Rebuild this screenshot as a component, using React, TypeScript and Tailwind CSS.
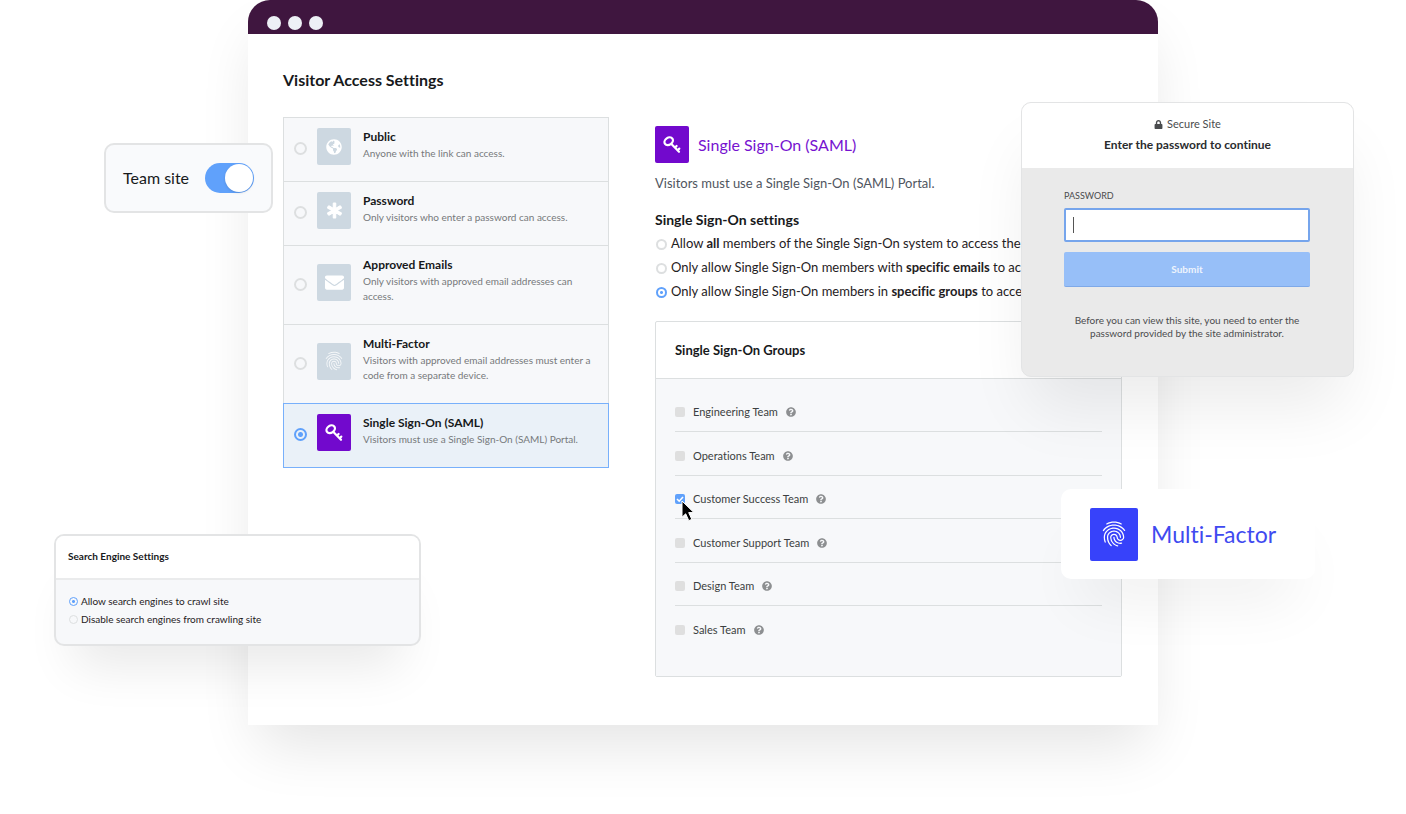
import React from "react";
import { FaAsterisk, FaEnvelope, FaGlobeAmericas, FaLock, FaQuestionCircle } from "react-icons/fa";
import { MdFingerprint } from "react-icons/md";

function KeyIcon({ className }: { className?: string }) {
  return (
    <svg viewBox="0 0 18 18" className={className} fill="none" stroke="currentColor" strokeLinecap="round" aria-hidden="true">
      <ellipse cx="5.7" cy="5.2" rx="4.5" ry="3.5" transform="rotate(-35 5.7 5.2)" strokeWidth="2.2" />
      <path d="M8.4 8 16 15.8M12 11.6l1.6-1.6M14.6 14.2l1.7-1.6" strokeWidth="2.2" />
    </svg>
  );
}

const methods = [
  { id: "public", title: "Public", text: "Anyone with the link can access.", icon: <FaGlobeAmericas className="size-4" /> },
  { id: "password", title: "Password", text: "Only visitors who enter a password can access.", icon: <FaAsterisk className="size-[15px] overflow-visible stroke-current stroke-[36px]" /> },
  { id: "emails", title: "Approved Emails", text: "Only visitors with approved email addresses can access.", icon: <FaEnvelope className="size-[19px]" /> },
  { id: "mfa", title: "Multi-Factor", text: "Visitors with approved email addresses must enter a code from a separate device.", icon: <MdFingerprint className="size-[22px] opacity-80" /> },
  { id: "saml", title: "Single Sign-On (SAML)", text: "Visitors must use a Single Sign-On (SAML) Portal.", icon: <KeyIcon className="size-[18px]" /> },
];

const groups = ["Engineering Team", "Operations Team", "Customer Success Team", "Customer Support Team", "Design Team", "Sales Team"];

const radioBase = "shrink-0 appearance-none rounded-full border-[#dddfe0] checked:border-[#60a1fb]";
const dotLarge = "checked:bg-[radial-gradient(circle,#60a1fb_0,#60a1fb_2px,transparent_3px)]";
const dotSmall = "checked:bg-[radial-gradient(circle,#60a1fb_0,#60a1fb_1px,transparent_2px)]";

function AccessMethods() {
  return (
    <fieldset aria-label="Access method" className="w-[326px] shrink-0">
      {methods.map((m) => (
        <label
          key={m.id}
          className="-mt-px flex items-stretch border border-[#dcdfe0] bg-[#f7f8fa] px-2.5 pt-2.5 pb-4 first:mt-0 has-checked:relative has-checked:border-[#78b0fb] has-checked:bg-[#eaf1f8]"
        >
          <span className="flex items-center">
            <input
              type="radio"
              name="method"
              defaultChecked={m.id === "saml"}
              className={`mt-1 size-[13px] border-2 ${radioBase} ${dotLarge}`}
            />
            <span
              className={`ml-2.5 flex h-[37px] w-[34px] items-center justify-center rounded-xs text-white ${m.id === "saml" ? "bg-[#7209cd]" : "bg-[#cdd8e1]"}`}
            >
              {m.icon}
            </span>
          </span>
          <span className="ml-3 pb-1">
            <span className="block text-[12px] leading-[18px] font-bold text-[#17191b]">{m.title}</span>
            <span className="block text-[10px] leading-[15px] text-[#76797b]">{m.text}</span>
          </span>
        </label>
      ))}
    </fieldset>
  );
}

function SamlDetails() {
  const option = `size-[11px] border-2 ${radioBase} ${dotSmall}`;
  const row = "flex h-6 items-center gap-1 whitespace-nowrap";
  return (
    <section className="min-w-0 flex-1 pt-[9px]">
      <div className="flex items-center gap-[9px]">
        <span className="flex h-[37px] w-[34px] items-center justify-center rounded-xs bg-[#7209cd] text-white">
          <KeyIcon className="size-[18px]" />
        </span>
        <h2 className="text-[16px] leading-6 text-[#7612d0]">Single Sign-On (SAML)</h2>
      </div>
      <p className="mt-2.5 text-[13px] leading-5 text-[#4f5560]">Visitors must use a Single Sign-On (SAML) Portal.</p>
      <fieldset className="mt-[15px] overflow-hidden pl-px text-[13px] text-[#1f2123]">
        <legend className="-ml-px text-[14px] leading-6 font-bold text-[#17191b]">Single Sign-On settings</legend>
        <label className={row}>
          <input type="radio" name="scope" className={option} />
          <span>Allow <b>all</b> members of the Single Sign-On system to access the site</span>
        </label>
        <label className={row}>
          <input type="radio" name="scope" className={option} />
          <span>Only allow Single Sign-On members with <b>specific emails</b> to access</span>
        </label>
        <label className={row}>
          <input type="radio" name="scope" defaultChecked className={option} />
          <span>Only allow Single Sign-On members in <b>specific groups</b> to access</span>
        </label>
      </fieldset>
      <div className="mt-[17px] rounded-xs border border-[#dcdfe0]">
        <h3 className="border-b border-[#dcdfe0] px-[19px] py-5 text-[13px] leading-4 font-bold text-[#17191b]">Single Sign-On Groups</h3>
        <ul className="bg-[#f7f8fa] px-[19px] pt-2.5 pb-[26px]">
          {groups.map((g, i) => (
            <li key={g} className="flex h-11 items-center border-b border-[#dcdfe0] pt-1 last:border-b-0 [&:not(:nth-child(2n))]:h-[43px]">
              <label className="flex items-center gap-2 text-[11px] leading-4 text-[#3c3f41]">
                <span className="relative flex">
                  <input
                    type="checkbox"
                    defaultChecked={i === 2}
                    className="size-[10px] appearance-none rounded-xs bg-[#dfdfdf] checked:bg-[#60a1fb]"
                  />
                  {i === 2 && (
                    <>
                      <svg viewBox="0 0 10 10" className="pointer-events-none absolute inset-0 size-[10px]" fill="none" stroke="white" strokeWidth="1.6">
                        <path d="M2 5l2.2 2.2L8 3" />
                      </svg>
                      <svg viewBox="0 0 14 22" className="pointer-events-none absolute top-1.5 left-1.5 h-[22px] w-[14px]" aria-hidden="true">
                        <path d="M1 1v16.2l3.7-3.4 3.1 6.9 3-1.4-3.1-6.7h5.2z" fill="#000" stroke="#fff" strokeWidth="1" />
                      </svg>
                    </>
                  )}
                </span>
                {g}
              </label>
              <FaQuestionCircle className="ml-2 size-[10px] text-[#8d8f91]" />
            </li>
          ))}
        </ul>
      </div>
    </section>
  );
}

function TeamSiteCard() {
  return (
    <label className="absolute top-[143px] -left-36 flex h-[70px] w-[169px] items-center justify-between rounded-[10px] border-2 border-[#e3e4e5] bg-[#f9fafc] px-[17px] text-[16px] text-[#17191b]">
      Team site
      <input
        type="checkbox"
        role="switch"
        defaultChecked
        className="relative h-[30px] w-[49px] appearance-none rounded-full bg-[#dfdfdf] before:absolute before:top-px before:left-px before:size-7 before:rounded-full before:bg-white before:shadow checked:bg-[#60a1fb] checked:before:left-5"
      />
    </label>
  );
}

function SearchEngineCard() {
  const row = "flex h-[18px] items-center gap-[3px] text-[10px] text-[#1f2123]";
  const option = `size-[9px] border ${radioBase} ${dotSmall}`;
  return (
    <section className="absolute top-[534px] -left-[194px] w-[367px] overflow-clip rounded-[10px] border-2 border-[#e3e4e5] bg-[#f7f8fa] shadow-[0_40px_50px_-20px_rgba(0,0,0,0.09)]">
      <h3 className="border-b-2 border-[#eaebec] bg-white px-3 pt-[11px] pb-[13px] text-[10px] leading-[18px] font-bold text-[#17191b]">Search Engine Settings</h3>
      <div className="px-[13px] pt-3 pb-4">
        <label className={row}>
          <input type="radio" name="crawl" defaultChecked className={option} />
          Allow search engines to crawl site
        </label>
        <label className={row}>
          <input type="radio" name="crawl" className={option} />
          Disable search engines from crawling site
        </label>
      </div>
    </section>
  );
}

function PasswordCard() {
  return (
    <form className="absolute top-[102px] left-[773px] w-[333px] overflow-clip rounded-[10px] border border-[#e3e4e5] bg-[#eaeaea] shadow-[0_40px_60px_-10px_rgba(0,0,0,0.08)]">
      <header className="flex flex-col items-center bg-white pt-3 pb-[11px]">
        <p className="flex items-center gap-1 text-[11px] leading-[18px] text-[#4a4c4e]">
          <FaLock className="size-[9px]" />
          Secure Site
        </p>
        <h2 className="text-[12px] leading-6 font-bold text-[#2a2c2e]">Enter the password to continue</h2>
      </header>
      <div className="flex flex-col pt-5 pr-[43px] pb-9 pl-[42px]">
        <label htmlFor="site-password" className="text-[9px] leading-4 text-[#4a4c4e]">PASSWORD</label>
        <div className="relative mt-1 flex">
          <input id="site-password" type="password" className="h-[34px] w-full rounded-xs border-2 border-[#76a5ec] bg-white px-2 outline-none" />
          <span className="absolute top-[9px] left-[9px] h-4 w-px bg-[#555]" />
        </div>
        <button type="button" className="mt-2.5 h-[35px] rounded-xs border-b border-[#7fa9e8] bg-[#97bff8] text-[10px] font-bold text-[#eef4fd]">Submit</button>
        <p className="mt-[27px] text-center text-[10px] leading-[13px] text-[#4a4c4e]">
          Before you can view this site, you need to enter the
          <br />
          password provided by the site administrator.
        </p>
      </div>
    </form>
  );
}

function MultiFactorCard() {
  return (
    <div className="absolute top-[489px] left-[813px] flex h-[90px] w-[254px] items-center gap-[13px] rounded-[10px] bg-white pl-[29px] shadow-[0_40px_60px_-20px_rgba(0,0,0,0.07)]">
      <span className="flex h-[53px] w-12 items-center justify-center rounded-xs bg-[#3742fa] text-white">
        <MdFingerprint className="size-[30px]" />
      </span>
      <span className="text-[23px] whitespace-nowrap text-[#3f4af0]">Multi-Factor</span>
    </div>
  );
}

export default function App() {
  return (
    <div className="overflow-hidden bg-white pb-[89px] font-['Lato',sans-serif] [font-variant-ligatures:none]">
      <main className="relative mx-auto w-full max-w-[910px]">
        <div className="rounded-t-[22px] shadow-[0_30px_60px_-10px_rgba(0,0,0,0.11)]">
          <header className="flex h-[34px] items-center gap-[7px] rounded-t-[22px] bg-[#3f163f] pt-3 pl-[19px]">
            <span className="size-3.5 rounded-full bg-[#edf0f6]" />
            <span className="size-3.5 rounded-full bg-[#edf0f6]" />
            <span className="size-3.5 rounded-full bg-[#edf0f6]" />
          </header>
          <div className="bg-white pt-[34px] pr-9 pb-12 pl-[35px]">
            <h1 className="text-[16px] leading-6 font-bold text-[#17191b]">Visitor Access Settings</h1>
            <div className="mt-[25px] flex items-start gap-[46px]">
              <AccessMethods />
              <SamlDetails />
            </div>
          </div>
        </div>
        <TeamSiteCard />
        <SearchEngineCard />
        <PasswordCard />
        <MultiFactorCard />
      </main>
    </div>
  );
}
